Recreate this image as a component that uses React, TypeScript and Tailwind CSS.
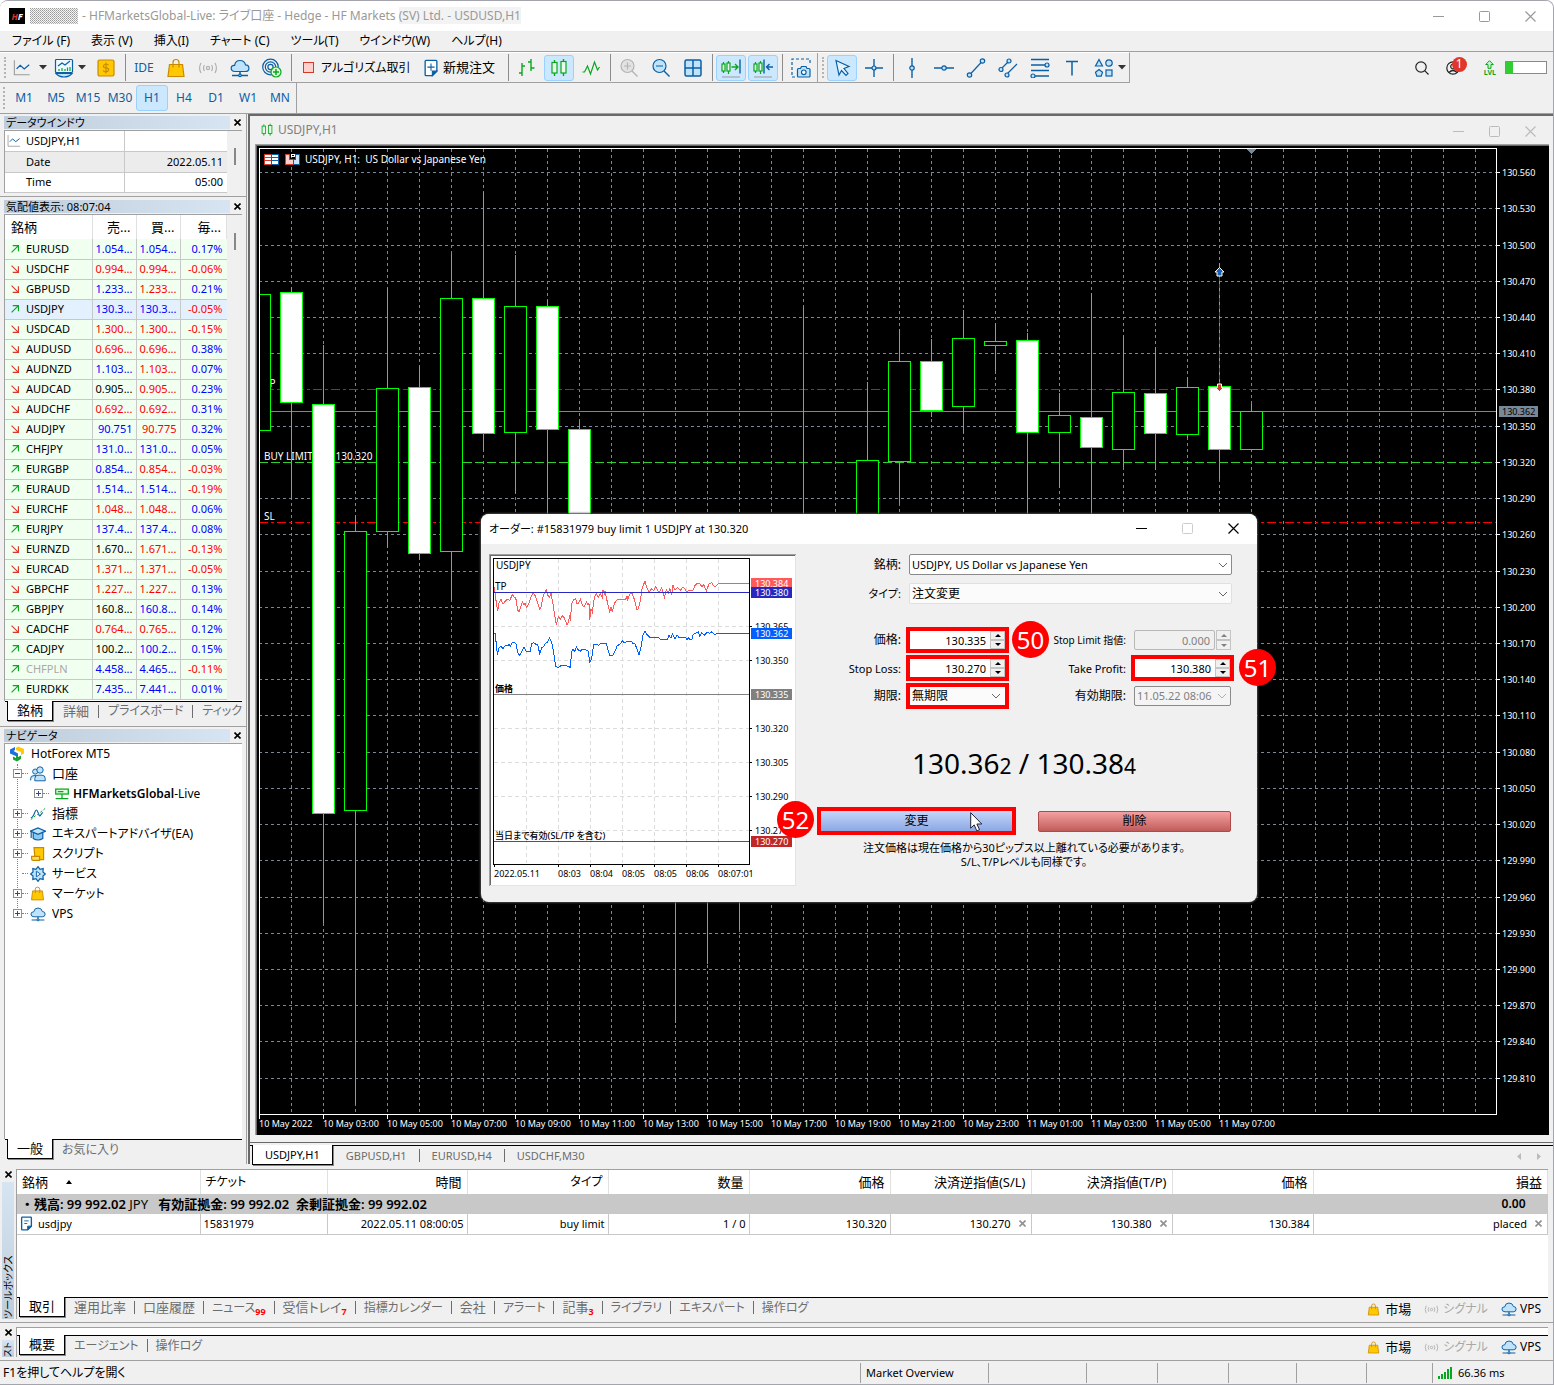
import React from "react";

const BLUE = "#0a5fa5";
const SKY = "#bfe3fb";
const GREEN = "#0aa61e";

/* ---------- icons ---------- */

type IconProps = { size?: number; children: React.ReactNode; stroke?: string; fill?: string };
const Svg = ({ size = 20, children, stroke = BLUE, fill = "none" }: IconProps) => (
  <svg width={size} height={size} viewBox="0 0 20 20" fill={fill} stroke={stroke} strokeWidth="1.2" className="shrink-0" aria-hidden="true">
    {children}
  </svg>
);

const ChartIcon = ({ size = 20 }: { size?: number }) => (
  <Svg size={size}>
    <path d="M1.5 1.5v16h17" stroke="#9a9a9a" />
    <path d="M4 11l4-4 4.500 4L18 6.500" strokeWidth="1.400" />
  </Svg>
);
const MarketIcon = () => (
  <Svg>
    <path d="M1.500 2.500q0-1 1-1h15q1 0 1 1v11q0 1-1 1h-15q-1 0-1-1z" fill="#eef8ff" />
    <path d="M2 15.500q3 3.500 8 3.500t8-3.500z" fill={SKY} />
    <path d="M4 8l4-3 3 2 5-4" />
    <path d="M5 13v-2M8 13v-3M11 13v-2M13.500 13v-3.500M16 13V9" stroke={GREEN} />
  </Svg>
);
const DollarIcon = () => (
  <Svg stroke="#c98a00">
    <rect x="2" y="2" width="16" height="16" rx="1.500" fill="#ffc800" />
    <path d="M12.500 7.200Q12 6 10 6T7.500 7.800 10 9.900t2.600 2-2.600 1.900-2.700-1.400M10 4.500v11" />
  </Svg>
);
const BagIcon = ({ size = 20 }: { size?: number }) => (
  <Svg size={size} stroke="#c98a00">
    <path d="M7 8V4.500Q7 1.500 10 1.500t3 3V8" />
    <path d="M3.500 6.500h13l1.500 12H2z" fill="#ffc800" />
    <path d="M7 6.500v3M13 6.500v3" />
  </Svg>
);
const SignalIcon = ({ size = 20 }: { size?: number }) => (
  <Svg size={size} stroke="#b0b0b0">
    <circle cx="10" cy="10" r="1.600" />
    <path d="M6.500 7q-2 3 0 6M13.500 7q2 3 0 6M3 5q-2.800 5 0 10M17 5q2.800 5 0 10" />
  </Svg>
);
const CloudIcon = ({ size = 20 }: { size?: number }) => (
  <Svg size={size}>
    <path d="M5 13.500q-3.800-.2-3.800-3.300T4.600 7.400Q5.400 2.500 10 2.500t5.500 4.400q3.400 0 3.400 3.300t-3.600 3.300z" fill={SKY} />
    <path d="M10 13.500v3M2 17.500h16" strokeWidth="1.500" />
    <circle cx="10" cy="17.300" r="1.300" fill={SKY} />
  </Svg>
);
const TargetIcon = () => (
  <Svg>
    <circle cx="8.500" cy="9" r="7.800" />
    <circle cx="8.500" cy="9" r="5.200" />
    <circle cx="8.500" cy="9" r="2.600" />
    <circle cx="14" cy="14" r="5" fill="#dcffd8" stroke={GREEN} />
    <path d="M14 11v6M11 14h6" stroke={GREEN} strokeWidth="1.500" />
  </Svg>
);
const DocIcon = ({ size = 20 }: { size?: number }) => (
  <Svg size={size}>
    <path d="M4.500 1.500h11q1 0 1 1v11l-5 5h-7q-1 0-1-1v-15q0-1 1-1z" fill="#fff" strokeWidth="1.500" />
    <path d="M16.500 13.500h-5v5z" fill={BLUE} />
    <path d="M10 5v8M6 9h8" />
  </Svg>
);
const NoteIcon = () => (
  <Svg size={15}>
    <path d="M4.500 1.500h11q1 0 1 1v11l-5 5h-7q-1 0-1-1v-15q0-1 1-1z" fill="#fff" strokeWidth="1.800" />
    <path d="M16.500 13.500h-5v5z" fill={BLUE} />
    <path d="M7 6.500h6M7 10h4" />
  </Svg>
);
const BarsIcon = () => (
  <Svg stroke={GREEN}>
    <path d="M5 5v13M5 8h3M2 15h3M14 1v12M11 4h3M14 10h3.500" strokeWidth="1.400" />
  </Svg>
);
const CandlesIcon = ({ size = 20 }: { size?: number }) => (
  <Svg size={size} stroke={GREEN}>
    <path d="M5.500 2v16M14.500 1v17" strokeWidth="1.400" />
    <rect x="3" y="4.500" width="5" height="10.500" fill="#e9ffe9" />
    <rect x="12" y="3.500" width="5" height="11.500" fill="#e9ffe9" />
  </Svg>
);
const LineIcon = () => (
  <Svg stroke={GREEN}>
    <path d="M1.500 14h2l3-6 3 8 4-12 3 8 2-3" />
  </Svg>
);
const LensIcon = ({ plus, stroke, fill }: { plus?: boolean; stroke: string; fill: string }) => (
  <Svg stroke={stroke}>
    <path d="M13 13l5.500 5.500" strokeWidth="1.400" />
    <circle cx="8.500" cy="8" r="6.500" fill={fill} />
    <path d={plus ? "M5 8h7M8.500 4.500v7" : "M5 8h7"} />
  </Svg>
);
const GridIcon = () => (
  <Svg>
    <rect x="2" y="2" width="16" height="16" rx="1.500" fill={SKY} strokeWidth="1.500" />
    <path d="M10 2v16M2 10h16" strokeWidth="1.500" />
  </Svg>
);
const ShiftIcon = ({ back }: { back?: boolean }) => (
  <Svg stroke={GREEN}>
    <path d="M2.500 4v11M7.500 3v13" />
    <rect x="1" y="6" width="3" height="7" fill="#e9ffe9" />
    <rect x="6" y="5" width="3" height="8" fill="#e9ffe9" />
    {back ? (
      <path d="M11 1.500v14M20 9h-6M16.500 6L13.500 9l3 3" stroke={BLUE} strokeWidth="1.400" />
    ) : (
      <>
        <path d="M10.500 9h6M14 6l3 3-3 3" strokeWidth="1.400" />
        <path d="M19 1.500v14" stroke={BLUE} strokeWidth="1.400" />
      </>
    )}
    <path d="M1 19h18" stroke="#999" />
  </Svg>
);
const CameraIcon = () => (
  <Svg>
    <path d="M4 19H1V1h18v5" strokeDasharray="3 2" />
    <path d="M6.500 11.500q0-1 1-1h2l1-2h4.500l1 2h2q1 0 1 1v6.500q0 1-1 1h-10.500q-1 0-1-1z" fill={SKY} />
    <circle cx="12.800" cy="14.300" r="2.300" fill="#fff" />
  </Svg>
);
const CursorIcon = () => (
  <Svg>
    <path d="M4 2.500l13 6-5 2 4 5-2 2-4.500-5-2.500 4.500z" fill="#e4f4ff" />
  </Svg>
);
const CrossIcon = () => (
  <Svg>
    <path d="M10 1v18M1 10h18" strokeWidth="1.400" />
    <circle cx="10" cy="10" r="2" fill={SKY} />
  </Svg>
);
const VLineIcon = () => (
  <Svg>
    <path d="M10 0v20" strokeWidth="1.400" />
    <circle cx="10" cy="10" r="2.200" fill={SKY} />
  </Svg>
);
const HLineIcon = () => (
  <Svg>
    <path d="M0 10h20" strokeWidth="1.400" />
    <circle cx="10" cy="10" r="2.200" fill={SKY} />
  </Svg>
);
const TrendIcon = () => (
  <Svg>
    <path d="M3 17.500L17 2.500" />
    <circle cx="3.500" cy="17" r="2.200" fill={SKY} />
    <circle cx="16.500" cy="3" r="2.200" fill={SKY} />
  </Svg>
);
const ChannelIcon = () => (
  <Svg>
    <path d="M3 11l8-8M8 17L19 6" />
    <circle cx="3" cy="11.500" r="2" fill={SKY} />
    <circle cx="11" cy="3" r="2" fill={SKY} />
    <circle cx="9" cy="17" r="2" fill={SKY} />
  </Svg>
);
const FiboIcon = () => (
  <Svg>
    <path d="M1 1.500h18M1 7h15M1 12.500h18M4 18h15" strokeWidth="1.400" />
    <circle cx="17" cy="7" r="2" fill={SKY} />
    <circle cx="3" cy="18" r="2" fill={SKY} />
  </Svg>
);
const TextIcon = () => (
  <Svg>
    <path d="M4 3.500h12M10 3.500v14" strokeWidth="1.500" />
  </Svg>
);
const ShapesIcon = () => (
  <Svg>
    <path d="M5 1.500L8.500 8h-7z" fill={SKY} />
    <circle cx="15" cy="5" r="3.200" fill={SKY} />
    <path d="M5 11.500l3.500 2.700-1.300 4H2.800l-1.300-4z" fill={SKY} />
    <rect x="12" y="12" width="6" height="6" fill={SKY} />
  </Svg>
);
const Caret = () => (
  <svg width="8" height="5" viewBox="0 0 8 5" className="shrink-0" aria-hidden="true">
    <path d="M0 0h8L4 4.500z" fill="#333" />
  </svg>
);
const CloseX = ({ className = "" }: { className?: string }) => (
  <svg width="7" height="7" viewBox="0 0 7 7" className={className} aria-hidden="true">
    <path d="M.5.5l6 6M6.500.5l-6 6" stroke="currentColor" strokeWidth="1.600" />
  </svg>
);
const WindowGlyphs = ({ min = "#999", max = "#999", close = "#999", step = "gap-[35px]" }) => (
  <div className={`flex items-center ${step}`}>
    <button aria-label="最小化">
      <svg width="11" height="11" viewBox="0 0 11 11"><path d="M0 5.500h11" stroke={min} /></svg>
    </button>
    <button aria-label="最大化">
      <svg width="11" height="11" viewBox="0 0 11 11"><rect x=".5" y=".5" width="10" height="10" rx="1" fill="none" stroke={max} /></svg>
    </button>
    <button aria-label="閉じる">
      <svg width="11" height="11" viewBox="0 0 11 11"><path d="M.5.5l10 10M10.500.5l-10 10" stroke={close} strokeWidth="1.200" /></svg>
    </button>
  </div>
);

/* ---------- toolbars ---------- */

const Sep = () => (
  <div className="flex w-[6px] justify-center self-stretch py-px">
    <div className="w-px bg-[#8c8c8c]" />
  </div>
);
const Grip = () => <div className="my-1 w-0 self-stretch border-l-2 border-dotted border-[#b4b4b4]" />;

const Tool = ({ children, label, on }: { children: React.ReactNode; label: string; on?: boolean }) => (
  <button aria-label={label} className="flex w-8 justify-center">
    <span className={`flex h-[26px] w-[30px] items-center justify-center rounded-[3px] border ${on ? "border-[#99d1ff] bg-[#cce8ff]" : "border-transparent"}`}>
      {children}
    </span>
  </button>
);

const menus = ["ファイル (F)", "表示 (V)", "挿入(I)", "チャート (C)", "ツール(T)", "ウインドウ(W)", "ヘルプ(H)"];
const frames = ["M1", "M5", "M15", "M30", "H1", "H4", "D1", "W1", "MN"];

const TitleBar = () => (
  <header className="flex h-[30px] items-center bg-white pr-[17px] pl-[9px]">
    <div className="flex h-4 w-4 items-center justify-center bg-black text-[9px] font-bold text-white italic">
      <span className="text-[#d9362a]">H</span>F
    </div>
    <svg width="48" height="16" className="mr-1 ml-[5px]" aria-hidden="true">
      <defs>
        <pattern id="mask" width="2" height="2" patternUnits="userSpaceOnUse">
          <rect width="2" height="2" fill="#f4f4f4" />
          <rect width="1" height="1" fill="#9a9a9a" />
          <rect x="1" y="1" width="1" height="1" fill="#b4b4b4" />
        </pattern>
      </defs>
      <rect width="48" height="16" fill="url(#mask)" />
    </svg>
    <h1 className="text-[12px] text-[#999]">
      - HFMarketsGlobal-Live: ライブ口座 - Hedge - HF Markets <span className="bg-[#f3f3f3]">(SV) Ltd. - USDUSD,H1</span>
    </h1>
    <div className="ml-auto">
      <WindowGlyphs />
    </div>
  </header>
);

const Toolbars = () => (
  <>
    <nav className="flex h-5 items-center gap-[21px] bg-[#f0f0f0] pl-3 text-[12px]">
      {menus.map((m) => (
        <button key={m}>{m}</button>
      ))}
    </nav>
    <div className="flex h-8 border-t border-[#a0a0a0]">
      <div className="flex items-center border-t border-r border-b border-[#a0a0a0] border-t-white pl-1">
        <Grip />
        <button aria-label="チャートの種類" className="flex w-[42px] items-center gap-2 pl-[7px]">
          <ChartIcon size={18} />
          <Caret />
        </button>
        <button aria-label="気配値" className="flex w-[42px] items-center gap-1 pl-[6px]">
          <MarketIcon />
          <Caret />
        </button>
        <Tool label="取引"><DollarIcon /></Tool>
        <Sep />
        <button className="w-8 text-center text-[12px] text-[#0a5fa5]">IDE</button>
        <Tool label="マーケット"><BagIcon /></Tool>
        <Tool label="シグナル"><SignalIcon /></Tool>
        <Tool label="VPS"><CloudIcon /></Tool>
        <Tool label="コピー"><TargetIcon /></Tool>
        <Sep />
        <button className="flex w-[122px] items-center gap-[7px] pl-[9px] text-[12px] whitespace-nowrap">
          <span className="h-[11px] w-[11px] shrink-0 border border-[#d9362a] bg-[#ffd0cc]" />
          アルゴリズム取引
        </button>
        <button className="flex w-[89px] items-center gap-[3px] pl-[6px] text-[13px] whitespace-nowrap">
          <DocIcon size={18} />
          新規注文
        </button>
        <Sep />
        <Tool label="バーチャート"><BarsIcon /></Tool>
        <Tool label="ローソク足" on><CandlesIcon /></Tool>
        <Tool label="ラインチャート"><LineIcon /></Tool>
        <Sep />
        <Tool label="ズームイン"><LensIcon plus stroke="#b4b4b4" fill="#e2e2e2" /></Tool>
        <Tool label="ズームアウト"><LensIcon stroke={BLUE} fill={SKY} /></Tool>
        <Tool label="タイル"><GridIcon /></Tool>
        <Sep />
        <Tool label="自動スクロール" on><ShiftIcon /></Tool>
        <Tool label="チャートシフト" on><ShiftIcon back /></Tool>
        <Sep />
        <Tool label="画像保存"><CameraIcon /></Tool>
        <div className="flex w-[9px] justify-between self-stretch pr-[2px]">
          <div className="w-px bg-[#a0a0a0]" />
          <Grip />
        </div>
        <Tool label="カーソル" on><CursorIcon /></Tool>
        <Tool label="十字線"><CrossIcon /></Tool>
        <Sep />
        <Tool label="垂直線"><VLineIcon /></Tool>
        <Tool label="水平線"><HLineIcon /></Tool>
        <Tool label="トレンドライン"><TrendIcon /></Tool>
        <Tool label="チャネル"><ChannelIcon /></Tool>
        <Tool label="フィボナッチ"><FiboIcon /></Tool>
        <Tool label="テキスト"><TextIcon /></Tool>
        <button aria-label="図形" className="flex w-[41px] items-center gap-1 pl-[6px]">
          <ShapesIcon />
          <Caret />
        </button>
      </div>
      <div className="ml-auto flex items-center pr-[6px]">
        <button aria-label="検索" className="mr-[17px]">
          <svg width="14" height="14" viewBox="0 0 14 14" fill="none" stroke="#222" strokeWidth="1.200">
            <circle cx="6" cy="6" r="5.200" />
            <path d="M9.700 9.700L13.500 13.500" />
          </svg>
        </button>
        <button aria-label="通知" className="relative mr-[24px] h-[14px] w-[14px]">
          <svg width="14" height="14" viewBox="0 0 14 14" fill="none" stroke="#222" strokeWidth="1.200">
            <circle cx="7" cy="7" r="6.200" />
            <circle cx="7" cy="5.500" r="2.300" />
            <path d="M3 11.500q4-4 8 0" />
          </svg>
          <span className="absolute -top-1 left-[6px] flex h-[15px] w-[15px] items-center justify-center rounded-full bg-[#e0372c] text-[12px] leading-none text-white">1</span>
        </button>
        <button className="mr-[9px] flex flex-col items-center text-[7px] leading-[7px] font-bold text-[#0aa61e]">
          <svg width="9" height="9" viewBox="0 0 9 9" fill="#c9f7cc" stroke={GREEN}><path d="M4.500.7L8.300 4.500H6v3.800H3V4.500H.7z" /></svg>
          LVL
        </button>
        <div className="flex h-[13px] w-[42px] border border-[#8a8a8a] bg-white">
          <div className="w-[7px] bg-[#32cd32]" />
        </div>
      </div>
    </div>
    <div className="flex h-[31px] border-b border-[#a0a0a0]">
      <div className="flex items-center border-r border-[#a0a0a0] pl-[3px]">
        <Grip />
        <div className="flex pl-[3px]">
          {frames.map((f) => (
            <button
              key={f}
              className={
                f === "H1"
                  ? "h-[26px] w-8 rounded-[3px] border border-[#99d1ff] bg-[#cce8ff] text-[12px] text-[#0a5fa5]"
                  : "h-[26px] w-8 text-[12px] text-[#0a5fa5]"
              }
            >
              {f}
            </button>
          ))}
        </div>
      </div>
    </div>
  </>
);

/* ---------- left side ---------- */

const PaneHeader = ({ title }: { title: string }) => (
  <div className="flex h-[15px] items-center justify-between pr-1 pl-1">
    <h2 className="h-[13px] w-[226px] bg-linear-to-r from-[#bfcddb] to-[#d7e4f2] pl-[2px] text-[11px] leading-[13px]">{title}</h2>
    <button aria-label="閉じる" className="pr-px"><CloseX /></button>
  </div>
);

type Tab = { name: string; count?: string; sm?: boolean };
type TabStripProps = { tabs: Tab[]; gap?: string; first?: string; size?: string };
const TabStrip = ({ tabs, gap = "px-2", first = "px-[9px]", size = "text-[13px]" }: TabStripProps) => (
  <div className={`flex h-5 items-start pl-[2px] whitespace-nowrap ${size}`} role="tablist">
    {tabs.map((t, i) =>
      i === 0 ? (
        <button key={t.name} role="tab" aria-selected="true" className={`-mt-px h-5 border-x border-b border-black bg-white leading-[17px] shadow-[1px_1px_0_#888] ${first}`}>
          {t.name}
        </button>
      ) : (
        <button key={t.name} role="tab" aria-selected="false" className={`mt-[3px] flex h-[13px] items-center ${i === 1 ? "ml-px" : ""} ${gap} text-[#6d6d6d] ${i > 1 ? "border-l border-[#6d6d6d]" : ""}`}>
          <span className={t.sm ? "text-[12px]" : ""}>{t.name}</span>
          {t.count && <b className="mt-2 text-[9px] text-[#ff0000]">{t.count}</b>}
        </button>
      )
    )}
  </div>
);

/* symbol, up?, bid, ask, change; colour codes: b = blue, r = red, k = black */
const quotes: [string, boolean, string, string, string, string][] = [
  ["EURUSD", true, "1.054...", "1.054...", "0.17%", "bb"],
  ["USDCHF", false, "0.994...", "0.994...", "-0.06%", "rr"],
  ["GBPUSD", false, "1.233...", "1.233...", "0.21%", "br"],
  ["USDJPY", true, "130.3...", "130.3...", "-0.05%", "bb"],
  ["USDCAD", false, "1.300...", "1.300...", "-0.15%", "rr"],
  ["AUDUSD", false, "0.696...", "0.696...", "0.38%", "rr"],
  ["AUDNZD", false, "1.103...", "1.103...", "0.07%", "br"],
  ["AUDCAD", false, "0.905...", "0.905...", "0.23%", "kr"],
  ["AUDCHF", false, "0.692...", "0.692...", "0.31%", "rr"],
  ["AUDJPY", false, "90.751", "90.775", "0.32%", "br"],
  ["CHFJPY", true, "131.0...", "131.0...", "0.05%", "bb"],
  ["EURGBP", true, "0.854...", "0.854...", "-0.03%", "br"],
  ["EURAUD", true, "1.514...", "1.514...", "-0.19%", "bb"],
  ["EURCHF", false, "1.048...", "1.048...", "0.06%", "rr"],
  ["EURJPY", true, "137.4...", "137.4...", "0.08%", "bb"],
  ["EURNZD", false, "1.670...", "1.671...", "-0.13%", "kr"],
  ["EURCAD", false, "1.371...", "1.371...", "-0.05%", "rr"],
  ["GBPCHF", false, "1.227...", "1.227...", "0.13%", "rr"],
  ["GBPJPY", true, "160.8...", "160.8...", "0.14%", "kb"],
  ["CADCHF", false, "0.764...", "0.765...", "0.12%", "rr"],
  ["CADJPY", true, "100.2...", "100.2...", "0.15%", "kb"],
  ["CHFPLN", true, "4.458...", "4.465...", "-0.11%", "bb"],
  ["EURDKK", true, "7.435...", "7.441...", "0.01%", "bb"],
];
const tone: Record<string, string> = { b: "text-[#0000ff]", r: "text-[#ff0000]", k: "text-black" };

const MarketWatch = () => (
  <div className="mx-1 flex border-t border-l border-[#a0a0a0] bg-white pb-px">
    <table className="w-[222px] table-fixed text-[11px]">
      <colgroup>
        <col className="w-[87px]" />
        <col className="w-[44px]" />
        <col className="w-[44px]" />
        <col />
      </colgroup>
      <thead>
        <tr className="h-6 text-[13px]">
          <th className="border-r border-[#e0e0e0] pl-[6px] text-left font-normal">銘柄</th>
          <th className="border-r border-[#e0e0e0] pr-[5px] text-right font-normal">売...</th>
          <th className="border-r border-[#e0e0e0] pr-[5px] text-right font-normal">買...</th>
          <th className="border-r border-[#e0e0e0] pr-[5px] text-right font-normal">毎...</th>
        </tr>
      </thead>
      <tbody>
        {quotes.map(([s, up, bid, ask, ch, c]) => (
          <tr key={s} className={`h-5 border-b border-[#c8c8c8] ${s === "USDJPY" ? "bg-[#e3f1ff]" : "bg-[#f1fff1]"}`}>
            <td className="border-r border-[#c8c8c8] pl-[6px]">
              <div className={`flex items-center gap-[7px] leading-[18px] ${s === "CHFPLN" ? "text-[#a8a8a8]" : ""}`}>
                <svg width="8" height="8" viewBox="0 0 7 7" fill="none" stroke={up ? GREEN : "#d83a2c"} aria-hidden="true">
                  <path d={up ? "M.5 6.500L6.500.5M1.500.5h5v5" : "M.5.5l6 6M6.500 1v5.500h-5"} />
                </svg>
                {s}
              </div>
            </td>
            <td className={`border-r border-[#c8c8c8] pr-[3px] text-right leading-[18px] ${tone[c[0]]}`}>{bid}</td>
            <td className={`border-r border-[#c8c8c8] pr-[3px] text-right leading-[18px] ${tone[c[1]]}`}>{ask}</td>
            <td className={`pr-1 text-right leading-[18px] ${ch[0] === "-" ? "text-[#ff0000]" : "text-[#0000ff]"}`}>{ch}</td>
          </tr>
        ))}
      </tbody>
    </table>
    <div className="flex-1 bg-[#f0f0f0] pt-[18px] pl-[7px]">
      <div className="h-[17px] w-[2px] bg-[#888]" />
    </div>
  </div>
);

const Expander = ({ open }: { open?: boolean }) => (
  <svg width="9" height="9" viewBox="0 0 9 9" className="shrink-0" aria-hidden="true">
    <rect x=".5" y=".5" width="8" height="8" fill="#fff" stroke="#919191" />
    <path d={open ? "M2 4.500h5" : "M2 4.500h5M4.500 2v5"} stroke="#2f4a8c" />
  </svg>
);
const UsersIcon = () => (
  <Svg size={16}>
    <circle cx="6.500" cy="7" r="3.200" fill={SKY} />
    <path d="M.8 18v-2.500q0-3.500 4-3.500h3" fill={SKY} />
    <circle cx="12.500" cy="5" r="4" fill={SKY} />
    <path d="M6 18.500v-3q0-4 4-4h5q4 0 4 4v3z" fill={SKY} />
  </Svg>
);
const ServerIcon = () => (
  <Svg size={14} stroke={GREEN}>
    <rect x="1" y="3" width="18" height="7" fill="#dcffd8" strokeWidth="1.800" />
    <path d="M4 6.500h8M10 10v6M1 16.500h18" strokeWidth="1.800" />
  </Svg>
);
const IndicatorIcon = () => (
  <Svg size={16}>
    <path d="M1 15q3-1 5-7t4 0 3 4 3-4" strokeWidth="1.500" />
    <path d="M1 17l6-5M9 11l10-8" stroke={GREEN} strokeDasharray="3 2" />
  </Svg>
);
const CapIcon = () => (
  <Svg size={16}>
    <path d="M4 8.500v7q6 4 12 0v-7" fill="#8cc9f2" strokeWidth="1.500" />
    <path d="M.5 6.500L10 2.500l9.500 4L10 10.500z" fill={SKY} strokeWidth="1.600" />
    <path d="M1.500 7v8" strokeWidth="1.500" />
  </Svg>
);
const ScriptIcon = () => (
  <Svg size={16} stroke="#c98a00">
    <path d="M5 2h12v15H6V13z" fill="#ffc800" strokeWidth="1.500" />
    <path d="M2 13h10v5H4q-2 0-2-2.500z" fill="#ffdc50" strokeWidth="1.500" />
  </Svg>
);
const GearIcon = () => (
  <Svg size={16}>
    <path d="M10 .8l2.500 3.400 4-1-.3 4.200 3 2.600-3 2.600.3 4.200-4-1L10 19.200l-2.500-3.400-4 1 .3-4.200L.8 10l3-2.600-.3-4.200 4 1z" fill={SKY} strokeWidth="1.500" />
    <path d="M8 6.500v7l5-3.500z" fill="#fff" />
  </Svg>
);
const MtIcon = () => (
  <svg width="16" height="16" viewBox="0 0 16 16" aria-hidden="true">
    <path d="M1 3.500L6 1v3L4.500 5 9 7.500V11L1 7.500z" fill="#1b6fe0" />
    <path d="M7 2l2-1.500 6 2.500v4.500L12 9V6L7 4z" fill="#ffc800" />
    <path d="M4 10.500l3 1.500V9.500L9 11l3-1.500v3.500L8 15.500l-4-2z" fill="#18a330" />
  </svg>
);

const tree: { name: string; icon: React.ReactNode; exp?: boolean; leaf?: boolean; child?: boolean; kanji?: boolean }[] = [
  { name: "口座", icon: <UsersIcon />, exp: true, kanji: true },
  { name: "HFMarketsGlobal-Live", icon: <ServerIcon />, child: true },
  { name: "指標", icon: <IndicatorIcon />, kanji: true },
  { name: "エキスパートアドバイザ(EA)", icon: <CapIcon /> },
  { name: "スクリプト", icon: <ScriptIcon /> },
  { name: "サービス", icon: <GearIcon />, leaf: true },
  { name: "マーケット", icon: <BagIcon size={15} /> },
  { name: "VPS", icon: <CloudIcon size={16} /> },
];

const Navigator = () => (
  <div className="mx-1 flex-1 border-t border-l border-[#a0a0a0] bg-white text-[12px]">
    <div className="flex h-5 items-center gap-[6px] pl-[4px]">
      <MtIcon />
      HotForex MT5
    </div>
    <ul className="relative before:absolute before:top-0 before:left-3 before:h-[150px] before:border-l before:border-dotted before:border-[#808080]">
      {tree.map((n) => (
        <li key={n.name} className={`relative flex h-5 items-center ${n.child ? "pl-[29px]" : "pl-[8px]"}`}>
          {n.leaf ? <span className="w-[9px]" /> : <Expander open={n.exp} />}
          <span className="w-[6px] border-t border-dotted border-[#808080]" />
          <span className={`ml-[2px] flex items-center ${n.child ? "w-[20px] pl-1" : "w-[22px]"}`}>{n.icon}</span>
          {n.child ? (
            <span className="ml-[2px]">
              <b className="font-semibold">HFMarketsGlobal</b>-Live
            </span>
          ) : (
            <span className={n.kanji ? "text-[13px]" : ""}>{n.name}</span>
          )}
        </li>
      ))}
    </ul>
  </div>
);

const LeftSide = () => (
  <aside className="flex w-[247px] shrink-0 flex-col border-r border-[#a0a0a0] pt-px">
    <PaneHeader title="データウインドウ" />
    <div className="mx-1 flex h-[63px] overflow-hidden border-t border-l border-[#a0a0a0] bg-white">
      <table className="w-[222px] table-fixed text-[11px]">
        <tbody>
          <tr className="h-5 border-b border-[#c8c8c8]">
            <td className="w-[119px] border-r border-[#c8c8c8] pl-[2px]">
              <div className="flex items-center gap-[5px] leading-[18px]">
                <ChartIcon size={14} />
                USDJPY,H1
              </div>
            </td>
            <td />
          </tr>
          <tr className="h-5 border-b border-[#c8c8c8] bg-[#ececec]">
            <td className="border-r border-[#c8c8c8] pl-[21px] leading-[18px]">Date</td>
            <td className="pr-1 text-right leading-[18px]">2022.05.11</td>
          </tr>
          <tr className="h-5 border-b border-[#c8c8c8]">
            <td className="border-r border-[#c8c8c8] pl-[21px] leading-[18px]">Time</td>
            <td className="pr-1 text-right leading-[18px]">05:00</td>
          </tr>
        </tbody>
      </table>
      <div className="flex-1 bg-[#f0f0f0] pt-[17px] pl-[7px]">
        <div className="h-[17px] w-[2px] bg-[#888]" />
      </div>
    </div>
    <div className="mt-[3px] mb-[2px] border-t border-[#a0a0a0]" />
    <PaneHeader title="気配値表示: 08:07:04" />
    <MarketWatch />
    <div className="mr-1 ml-[5px] border-t border-black">
      <TabStrip gap="px-[9px]" tabs={[{ name: "銘柄" }, { name: "詳細" }, { name: "プライスボード", sm: true }, { name: "ティック", sm: true }]} />
    </div>
    <div className="mt-[4px] mb-px border-t border-[#a0a0a0]" />
    <PaneHeader title="ナビゲータ" />
    <Navigator />
    <div className="mr-1 ml-[5px] border-t border-black">
      <TabStrip tabs={[{ name: "一般" }, { name: "お気に入り", sm: true }]} />
    </div>
    <div className="h-1" />
  </aside>
);

/* ---------- price chart ---------- */

/* slot, high, body top, body bottom, low, filled body (y in chart pixels) */
const candles: [number, number, number, number, number, boolean][] = [
  [0, 148, 148, 284, 284, false],
  [1, 141, 146, 256, 353, true],
  [2, 199, 258, 667, 777, true],
  [3, 369, 385, 664, 958, false],
  [4, 142, 242, 385, 402, false],
  [5, 220, 241, 407, 414, true],
  [6, 108, 152, 405, 454, false],
  [7, 46, 152, 287, 304, true],
  [8, 109, 160, 286, 347, false],
  [9, 154, 160, 283, 420, true],
  [10, 276, 283, 420, 500, true],
  [13, 600, 600, 700, 877, false],
  [14, 600, 600, 700, 818, false],
  [15, 600, 600, 700, 784, false],
  [17, 161, 400, 450, 500, false],
  [19, 236, 314, 450, 500, false],
  [20, 183, 215, 315, 357, false],
  [21, 193, 215, 264, 271, true],
  [22, 164, 192, 260, 287, false],
  [23, 177, 195, 199, 225, false],
  [24, 187, 194, 286, 420, true],
  [25, 247, 269, 286, 342, false],
  [26, 147, 271, 301, 420, true],
  [27, 189, 246, 303, 321, false],
  [28, 201, 247, 287, 324, true],
  [29, 231, 241, 288, 292, false],
  [30, 117, 240, 303, 333, true],
  [31, 258, 265, 303, 303, false],
];
const priceRows = Array.from({ length: 26 }, (_, i) => ({
  y: Math.floor(26.6 + 36.22 * i),
  label: (130.56 - 0.03 * i).toFixed(3),
}));
const timeLabels = [
  "10 May 2022", "10 May 03:00", "10 May 05:00", "10 May 07:00", "10 May 09:00", "10 May 11:00", "10 May 13:00", "10 May 15:00",
  "10 May 17:00", "10 May 19:00", "10 May 21:00", "10 May 23:00", "11 May 01:00", "11 May 03:00", "11 May 05:00", "11 May 07:00",
];

const PriceChart = () => (
  <div className="flex min-h-[989px] flex-1 bg-black pl-[2px]">
    <svg className="h-[989px] min-w-0 flex-1" fontSize="9" fill="#fff" shapeRendering="crispEdges" role="img" aria-label="USDJPY H1">
      <g stroke="#778899" strokeDasharray="3 3">
        {priceRows.map((r) => (
          <line key={r.y} x1="0" x2="100%" y1={r.y + 0.5} y2={r.y + 0.5} />
        ))}
        {Array.from({ length: 38 }, (_, i) => (
          <line key={i} x1={32 * (i + 1) + 0.5} x2={32 * (i + 1) + 0.5} y1="3" y2="967" />
        ))}
      </g>
      <path d="M988 3h9l-4.500 5z" fill="#778899" />
      <line x1="0" x2="100%" y1="265.5" y2="265.5" stroke="#778899" />
      <line x1="0" x2="100%" y1="243.5" y2="243.5" stroke="#ff0000" strokeDasharray="9 3 3 3" />
      <line x1="0" x2="100%" y1="316.5" y2="316.5" stroke="#32cd32" strokeDasharray="9 3" />
      <line x1="0" x2="100%" y1="376.5" y2="376.5" stroke="#ff0000" strokeDasharray="9 3 3 3" />
      <g fontSize="10">
        <text x="5" y="241">TP</text>
        <text x="5" y="314">BUY LIMIT 1 at 130.320</text>
        <text x="5" y="374">SL</text>
      </g>
      <g stroke="#00ff00">
        {candles.map(([n, hi, top, bot, lo, full]) => (
          <g key={n}>
            <line x1={32 * n + 0.5} x2={32 * n + 0.5} y1={hi} y2={lo} />
            <rect x={32 * n - 10.5} y={top + 0.5} width="22" height={bot - top} fill={full ? "#fff" : "#000"} />
          </g>
        ))}
      </g>
      <path d="M960.5 131v110" stroke="#1560b8" strokeDasharray="4 3" />
      <path d="M960.500 121.500l4.500 4.500h-2v4h-5v-4h-2z" fill="#1560b8" stroke="#fff" shapeRendering="auto" />
      <path d="M960.500 245.500l4-4h-2v-3.500h-4v3.500h-2z" fill="#e0372c" stroke="#fff" shapeRendering="auto" />
      <rect x="5" y="8" width="7" height="11" fill="#fff" />
      <rect x="12" y="8" width="8" height="11" fill="#fff" />
      <path d="M5 8.500h7M5 11.500h7M5 14.500h7M5 18.500h7M5.500 8v11" stroke="#d9362a" />
      <path d="M13 8.500h7M13 11.500h7M13 14.500h7M13 18.500h7M19.500 8v11M12.500 8v11" stroke={BLUE} />
      <path d="M26.500 8.500h4v5h4v5h-8z" fill="#ffd0cc" stroke="#d9362a" />
      <path d="M40.500 8.500h-4v5h-2v5h6z" fill="#cce8ff" stroke={BLUE} />
      <path d="M32 8.500h3v2h-3z" fill="#000" stroke="#fff" />
      <text x="46" y="17" fontSize="10" xmlSpace="preserve">USDJPY, H1:  US Dollar vs Japanese Yen</text>
      <path d="M.5 2v967" stroke="#fff" />
      <line x1="0" x2="100%" y1="2.5" y2="2.5" stroke="#fff" />
      <line x1="0" x2="100%" y1="968.5" y2="968.5" stroke="#fff" />
      {timeLabels.map((t, i) => (
        <g key={t}>
          <path d={`M${64 * i + 0.5} 969v4`} stroke="#fff" />
          <text x={64 * i} y="981">{t}</text>
        </g>
      ))}
    </svg>
    <svg className="h-[989px] w-[53px] shrink-0" fontSize="9" fill="#fff" shapeRendering="crispEdges" aria-hidden="true">
      <path d="M.5 2v967" stroke="#fff" />
      {priceRows.map((r) => (
        <g key={r.y}>
          <path d={`M0 ${r.y + 0.5}h4`} stroke="#fff" />
          <text x="6" y={r.y + 4}>{r.label}</text>
        </g>
      ))}
      <rect x="3" y="260" width="39" height="11" fill="#778899" />
      <text x="6" y="269" fill="#000">130.362</text>
    </svg>
  </div>
);

/* ---------- order dialog ---------- */

const askLine =
  "40,232 44,265 50,302 54,280 60,268 66,282 74,272 80,268 86,272 92,258 96,254 100,264 104,262 110,300 114,306 120,288 124,276 128,284 132,280 136,292 142,284 150,262 156,248 162,256 168,272 176,296 180,292 186,262 190,250 196,240 200,256 206,262 210,250 216,282 220,310 226,344 232,320 238,328 244,318 250,324 258,344 262,336 266,316 268,332 272,280 278,270 284,266 288,282 292,280 298,268 304,286 310,290 316,276 320,284 324,280 326,330 330,296 334,306 340,262 346,250 352,262 358,252 364,262 366,240 370,250 372,242 376,262 382,290 386,306 390,292 394,306 400,280 410,268 434,268 438,258 440,268 446,252 452,248 460,268 468,300 472,296 478,272 484,232 492,214 496,228 504,248 512,236 518,242 524,230 534,248 542,234 550,262 556,240 562,248 566,236 572,252 576,226 582,240 590,232 598,242 604,232 610,234 616,244 636,240 642,226 648,220 656,220 662,230 668,224 676,242 684,222 692,218 700,230 704,230 712,220 804,220";
const bidLine =
  "40,370 44,372 46,415 50,430 54,414 60,408 66,416 72,408 78,408 84,404 88,408 94,398 102,398 106,404 110,428 114,436 120,430 126,416 130,412 136,424 148,424 152,400 158,398 166,404 170,404 176,430 182,414 188,410 192,402 200,396 206,384 210,392 214,406 220,440 224,470 232,472 242,466 258,468 268,472 272,424 276,418 282,424 286,410 292,420 298,424 304,418 314,420 322,424 324,440 326,456 332,446 338,404 346,402 352,406 360,400 376,400 382,424 386,436 396,436 402,424 408,408 420,400 424,392 430,398 436,396 446,396 452,394 456,402 462,402 466,412 474,436 480,412 486,376 492,364 500,376 506,382 534,384 540,390 558,390 564,376 570,384 574,372 582,388 588,374 594,382 614,382 618,390 622,384 626,388 632,390 636,374 644,370 652,366 656,378 662,368 672,376 678,366 686,370 692,366 702,374 710,370 804,370";

const TickChart = () => (
  <svg width="307" height="332" className="shrink-0 bg-white" fontSize="10" shapeRendering="crispEdges" role="img" aria-label="USDJPY ティックチャート">
    <path d="M0 .5h307M.5 0v332" stroke="#a0a0a0" />
    <path d="M1 1.500h305M1.500 1v330" stroke="#696969" />
    <path d="M306.500 1v331M1 331.500h306" stroke="#e3e3e3" />
    <g stroke="#dcdcdc" strokeDasharray="4 3">
      {[72, 106, 174, 208, 242, 276].map((y) => <path key={y} d={`M5 ${y + 0.5}h255`} />)}
      {[37, 69, 101, 133, 165, 197, 229].map((x) => <path key={x} d={`M${x + 0.5} 5v304`} />)}
    </g>
    <g transform="scale(.33333) translate(-24 -132)" fill="none">
      <polyline points={askLine} stroke="#ff5a5a" vectorEffect="non-scaling-stroke" />
      <polyline points={bidLine} stroke="#0060ff" vectorEffect="non-scaling-stroke" />
    </g>
    <path d="M5 38.500h255" stroke="#2828c0" />
    <path d="M5 140.500h255" stroke="#808080" />
    <path d="M5 287.500h255" stroke="#c02828" />
    <rect x="4.500" y="4.500" width="256" height="306" fill="none" stroke="#000" />
    <text x="7" y="15">USDJPY</text>
    <text x="6" y="36">TP</text>
    <text x="6" y="138" fontSize="9" fontWeight="bold">価格</text>
    <text x="6" y="285" fontSize="9" fontWeight="500">当日まで有効(SL/TP を含む)</text>
    {([[72, "130.365"], [106, "130.350"], [174, "130.320"], [208, "130.305"], [242, "130.290"], [276, "130.275"]] as [number, string][]).map(([y, t]) => (
      <g key={t}>
        <path d={`M261 ${y + 0.5}h2`} stroke="#000" />
        <text x="266" y={y + 4} fontSize="9">{t}</text>
      </g>
    ))}
    {([[29, "130.384", "#ff5a5a"], [38, "130.380", "#2828c0"], [79, "130.362", "#0060ff"], [140, "130.335", "#808080"], [287, "130.270", "#c02828"]] as [number, string, string][]).map(([y, t, c]) => (
      <g key={t}>
        <rect x="262" y={y - 5} width="41" height="11" fill={c} />
        <text x="266" y={y + 4} fontSize="9" fill="#fff">{t}</text>
      </g>
    ))}
    {([[5, "2022.05.11"], [69, "08:03"], [101, "08:04"], [133, "08:05"], [165, "08:05"], [197, "08:06"], [229, "08:07:01"]] as [number, string][]).map(([x, t]) => (
      <g key={x}>
        <path d={`M${x + 0.5} 311v2`} stroke="#000" />
        <text x={x} y="323" fontSize="9">{t}</text>
      </g>
    ))}
  </svg>
);

const Chevron = ({ off }: { off?: boolean }) => (
  <svg width="10" height="6" viewBox="0 0 10 6" className="pointer-events-none absolute right-[4px]" aria-hidden="true">
    <path d="M1 1l4 4 4-4" fill="none" stroke={off ? "#b0b0b0" : "#666"} />
  </svg>
);

const Spin = ({ off }: { off?: boolean }) => (
  <span className="flex w-[15px] flex-col">
    {["M0 3h6L3 0z", "M0 0h6L3 3z"].map((d, i) => (
      <button key={d} aria-label={i ? "減らす" : "増やす"} className="flex flex-1 items-center justify-center border border-[#c4c4c4] bg-[#f0f0f0]">
        <svg width="6" height="3" viewBox="0 0 6 3"><path d={d} fill={off ? "#808080" : "#000"} /></svg>
      </button>
    ))}
  </span>
);

const NumberField = ({ id, value, off, hot }: { id: string; value: string; off?: boolean; hot?: boolean }) => (
  <div className={`flex ${hot ? "h-[26px] border-4 border-[#ff0000]" : "mx-[3px] h-5 gap-px"}`}>
    <input
      id={id}
      defaultValue={value}
      disabled={off}
      className={`min-w-0 flex-1 text-right text-[11px] ${off ? "rounded-[2px] border border-[#b8b8b8] bg-[#f0f0f0] pr-1 text-[#808080]" : "bg-white pr-1"}`}
    />
    <Spin off={off} />
  </div>
);

const Badge = ({ n, pos }: { n: string; pos: string }) => (
  <span className={`absolute flex h-[37px] w-[37px] items-center justify-center rounded-full bg-[#ff0000] text-[24px] leading-none text-white ${pos}`}>{n}</span>
);

const OrderDialog = () => (
  <section role="dialog" aria-label="オーダー" className="absolute top-[398px] left-[231px] flex w-[776px] flex-col rounded-lg bg-[#f0f0f0] pb-4 text-[11px] shadow-[0_0_2px_1px_#444]">
    <div className="flex h-[30px] items-center justify-between rounded-t-lg bg-white pr-[18px] pb-px pl-2">
      <h2 className="text-[11px]">オーダー: #15831979 buy limit 1 USDJPY at 130.320</h2>
      <WindowGlyphs min="#000" max="#ccc" close="#000" />
    </div>
    <div className="flex pt-[10px] pl-2">
      <TickChart />
      <form className="flex-1" onSubmit={(e) => e.preventDefault()}>
        <div className="grid grid-cols-[105px_323px] items-center gap-x-2 gap-y-2">
          <label htmlFor="symbol" className="text-right text-[12px]">銘柄:</label>
          <div className="relative flex items-center">
            <select id="symbol" className="h-[21px] w-full appearance-none rounded-[2px] border border-[#8a8a8a] bg-white px-[2px] text-[11px] leading-[18px]">
              <option>USDJPY, US Dollar vs Japanese Yen</option>
            </select>
            <Chevron />
          </div>
          <label htmlFor="type" className="text-right text-[11px]">タイプ:</label>
          <div className="relative flex items-center">
            <select id="type" className="h-[21px] w-full appearance-none rounded-[2px] border border-[#e0e0e0] bg-[#fbfbfb] px-[2px] text-[12px] leading-[18px]">
              <option>注文変更</option>
            </select>
            <Chevron />
          </div>
        </div>
        <div className="mt-[22px] grid auto-rows-[28px] grid-cols-[105px_103px_112px_103px] items-center gap-x-[5px] text-right">
          <label htmlFor="price" className="text-[12px]">価格:</label>
          <NumberField id="price" value="130.335" hot />
          <label htmlFor="stoplimit" className="text-[10px] whitespace-nowrap">Stop Limit 指値:</label>
          <NumberField id="stoplimit" value="0.000" off />
          <label htmlFor="sl">Stop Loss:</label>
          <NumberField id="sl" value="130.270" hot />
          <label htmlFor="tp">Take Profit:</label>
          <NumberField id="tp" value="130.380" hot />
          <label htmlFor="expiry" className="text-[12px]">期限:</label>
          <div className="relative flex h-[26px] items-center border-4 border-[#ff0000]">
            <select id="expiry" className="h-full w-full appearance-none bg-[#fbfbfb] pl-[2px] text-[12px] leading-[18px]">
              <option>無期限</option>
            </select>
            <Chevron />
          </div>
          <label htmlFor="until" className="text-[12px]">有効期限:</label>
          <div className="relative mx-[3px] flex h-5 items-center">
            <select id="until" disabled className="h-full w-full appearance-none rounded-[2px] border border-[#8a8a8a] bg-[#f4f4f4] pl-[2px] text-[11px] leading-[18px] text-[#808080] opacity-100">
              <option>11.05.22 08:06</option>
            </select>
            <Chevron off />
          </div>
        </div>
        <p className="mt-[34px] pr-[5px] text-center text-[28px] leading-[38px]">
          130.36<span className="text-[21px]">2</span> / 130.38<span className="text-[21px]">4</span>
        </p>
        <div className="mt-[22px] flex items-center gap-[22px] pl-[21px]">
          <button className="h-7 w-[199px] border-4 border-[#ff0000] bg-linear-to-b from-[#c4d6fa] to-[#8ca8e4] text-[12px] leading-none">変更</button>
          <button className="h-[21px] w-[193px] rounded-[2px] border border-[#b04a4a] bg-linear-to-b from-[#f5a0a0] to-[#c05c5c] text-[12px] leading-none">削除</button>
        </div>
        <p className="mt-[6px] pr-[5px] text-center text-[11px] leading-[14px]">
          注文価格は現在価格から30ピップス以上離れている必要があります。
          <br />
          S/L、T/Pレベルも同様です。
        </p>
      </form>
    </div>
    <Badge n="50" pos="top-[107px] left-[531px]" />
    <Badge n="51" pos="top-[135px] left-[758px]" />
    <Badge n="52" pos="top-[287px] left-[296px]" />
    <svg width="13" height="20" viewBox="0 0 13 20" className="absolute top-[298px] left-[489px]" aria-hidden="true">
      <path d="M.7.7v15.500l3.500-3.300 2.600 6 2.700-1.200-2.600-5.700h4.900z" fill="#fff" stroke="#223" />
    </svg>
  </section>
);

/* ---------- bottom ---------- */

const columns = ["銘柄", "チケット", "時間", "タイプ", "数量", "価格", "決済逆指値(S/L)", "決済指値(T/P)", "価格", "損益"];
const smallColumns = ["チケット", "タイプ"];

const Services = () => (
  <div className="ml-auto flex items-center gap-[13px] pt-px pr-[7px] text-[12px]">
    <a href="#market" className="flex items-center gap-[5px] text-[13px]"><BagIcon size={13} />市場</a>
    <a href="#signals" className="flex items-center gap-1 text-[#a8a8a8]"><SignalIcon size={15} />シグナル</a>
    <a href="#vps" className="flex items-center gap-[3px]"><CloudIcon size={16} />VPS</a>
  </div>
);

const SideCaption = ({ text, size }: { text: string; size: string }) => (
  <div className="flex w-4 shrink-0 flex-col items-center">
    <button aria-label="閉じる" className="mb-[3px] flex h-[10px] items-center"><CloseX /></button>
    <div className={`flex w-3 flex-1 rotate-180 items-start bg-linear-to-b from-[#bfcddb] to-[#d7e4f2] whitespace-nowrap [text-orientation:sideways] [writing-mode:vertical-rl] ${size}`}>
      <span>{text}</span>
    </div>
  </div>
);

const SmallX = () => <CloseX className="text-[#909090]" />;

const Toolbox = () => (
  <section className="mt-[5px] flex h-[150px]">
    <SideCaption text="ツールボックス" size="text-[10px] leading-3" />
    <div className="mr-[5px] flex min-w-0 flex-1 flex-col border-t border-l border-[#a0a0a0] bg-white">
      <table className="w-full table-fixed text-[11px]">
        <colgroup>
          <col className="w-[183px]" />
          <col className="w-[127px]" />
          <col className="w-[140px]" />
          <col className="w-[141px]" />
          <col className="w-[141px]" />
          <col className="w-[141px]" />
          <col className="w-[141px]" />
          <col className="w-[141px]" />
          <col className="w-[141px]" />
          <col />
        </colgroup>
        <thead>
          <tr className="h-6 text-[13px]">
            {columns.map((c, i) => (
              <th
                key={i}
                className={`border-r border-[#e0e0e0] px-[5px] font-normal ${i < 2 ? "text-left" : "text-right"} ${smallColumns.includes(c) ? "text-[12px]" : ""}`}
              >
                {i === 0 ? (
                  <span className="flex items-center gap-[18px]">
                    {c}
                    <svg width="6" height="4" viewBox="0 0 6 4"><path d="M0 4h6L3 0z" /></svg>
                  </span>
                ) : (
                  c
                )}
              </th>
            ))}
          </tr>
        </thead>
        <tbody>
          <tr className="h-5 bg-[#c8c8c8] font-semibold">
            <td colSpan={9} className="pl-[7px] text-[13px] leading-[18px] whitespace-pre">
              ・ 残高: 99 992.02 <span className="font-normal">JPY</span>   有効証拠金: 99 992.02  余剰証拠金: 99 992.02
            </td>
            <td className="pr-[22px] text-right text-[12px]">0.00</td>
          </tr>
          <tr className="h-5 border-b border-[#c8c8c8] [&>td]:border-r [&>td]:border-[#c8c8c8] [&>td]:leading-[18px]">
            <td className="pl-[2px]">
              <div className="flex items-center gap-1"><NoteIcon />usdjpy</div>
            </td>
            <td className="pl-[3px]">15831979</td>
            <td className="pr-[3px] text-right">2022.05.11 08:00:05</td>
            <td className="pr-[3px] text-right">buy limit</td>
            <td className="pr-[3px] text-right">1 / 0</td>
            <td className="pr-[3px] text-right">130.320</td>
            <td className="pr-[5px]"><div className="flex items-center justify-end gap-2">130.270<SmallX /></div></td>
            <td className="pr-[5px]"><div className="flex items-center justify-end gap-2">130.380<SmallX /></div></td>
            <td className="pr-[3px] text-right">130.384</td>
            <td className="pr-[5px]"><div className="flex items-center justify-end gap-2">placed<SmallX /></div></td>
          </tr>
        </tbody>
      </table>
      <div className="mt-auto flex h-[22px] border-t border-black bg-[#f0f0f0]">
        <TabStrip
          tabs={[
            { name: "取引" }, { name: "運用比率" }, { name: "口座履歴" }, { name: "ニュース", count: "99", sm: true }, { name: "受信トレイ", count: "7" },
            { name: "指標カレンダー", sm: true }, { name: "会社" }, { name: "アラート", sm: true }, { name: "記事", count: "3" }, { name: "ライブラリ", sm: true },
            { name: "エキスパート", sm: true }, { name: "操作ログ", sm: true },
          ]}
        />
        <Services />
      </div>
    </div>
  </section>
);

export default function App() {
  return (
    <div className="flex min-h-screen flex-col overflow-hidden rounded-t-lg border-t border-r border-b border-[#a4a4ac] bg-[#f0f0f0] font-['Noto_Sans','Noto_Sans_CJK_JP',sans-serif] text-[12px] leading-none text-black [font-feature-settings:'palt']">
      <TitleBar />
      <Toolbars />
      <main className="flex flex-1">
        <LeftSide />
        <section className="relative ml-px flex min-w-0 flex-1 flex-col border-t-2 border-l-2 border-[#696969]">
          <div className="flex h-[28px] items-center gap-1 pr-[17px] pl-[10px] text-[12px] text-[#808080]">
            <CandlesIcon size={14} />
            <h2>USDJPY,H1</h2>
            <div className="ml-auto pt-[3px]"><WindowGlyphs min="#bbb" max="#bbb" close="#bbb" step="gap-[25px]" /></div>
          </div>
          <div className="mr-[4px] ml-[5px] flex flex-1 border-t border-l border-[#a0a0a0]">
            <div className="flex flex-1 border-t border-l border-[#696969]"><PriceChart /></div>
          </div>
          <div className="mt-[7px] border-t border-[#696969]" />
          <div className="mt-[2px] flex h-[19px] items-start border-t border-black">
            <TabStrip size="text-[11px]" gap="px-3" first="px-3" tabs={[{ name: "USDJPY,H1" }, { name: "GBPUSD,H1" }, { name: "EURUSD,H4" }, { name: "USDCHF,M30" }]} />
            <svg width="24" height="7" viewBox="0 0 24 7" className="mt-[7px] mr-3 ml-auto" aria-hidden="true">
              <path d="M4 0v7L0 3.500zM20 0v7l4-3.500z" fill="#bbb" />
            </svg>
          </div>
          <OrderDialog />
        </section>
      </main>
      <Toolbox />
      <div className="mt-[3px] border-t border-[#a0a0a0]" />
      <section className="mt-1 flex h-[30px]">
        <SideCaption text="スト" size="text-[9px] leading-3" />
        <div className="mr-[5px] flex flex-1 flex-col border-t border-l border-[#a0a0a0] bg-white">
          <div className="mt-[7px] flex h-[22px] border-t border-black bg-[#f0f0f0]">
            <TabStrip tabs={[{ name: "概要" }, { name: "エージェント", sm: true }, { name: "操作ログ", sm: true }]} />
            <Services />
          </div>
        </div>
      </section>
      <footer className="mt-[3px] flex h-6 items-center border-t border-[#a0a0a0]">
        <p className="pl-[3px] text-[12px]">F1を押してヘルプを開く</p>
        <div className="ml-auto flex h-5 items-center text-[11px]">
          <span className="flex h-full w-[128px] items-center border-l border-[#a0a0a0] pl-[5px]">Market Overview</span>
          <span className="h-full w-[98px] border-l border-[#a0a0a0]" />
          <span className="h-full w-[71px] border-l border-[#a0a0a0]" />
          <span className="h-full w-[71px] border-l border-[#a0a0a0]" />
          <span className="h-full w-[68px] border-l border-[#a0a0a0]" />
          <span className="h-full w-[70px] border-l border-[#a0a0a0]" />
          <span className="h-full w-[66px] border-l border-[#a0a0a0]" />
          <span className="flex h-full w-[121px] items-center gap-[6px] border-l border-[#a0a0a0] pl-[5px]">
            <svg width="14" height="12" viewBox="0 0 14 12" stroke={GREEN} strokeWidth="2" aria-hidden="true">
              <path d="M1 12V9M4 12V7M7 12V5M10 12V2M13 12V0" />
            </svg>
            66.36 ms
          </span>
        </div>
      </footer>
    </div>
  );
}
